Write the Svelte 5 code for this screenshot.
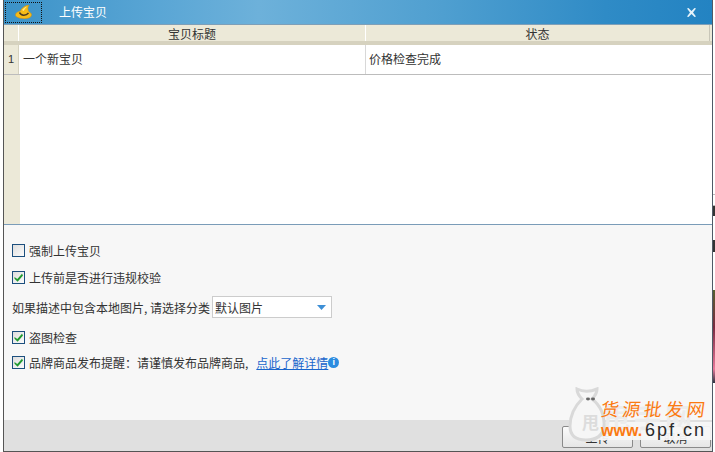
<script>
  let forceUpload = $state(false);
  let checkRules = $state(true);
  let checkStolen = $state(true);
  let brandNotice = $state(true);

  const items = [{ id: 1, title: '一个新宝贝', status: '价格检查完成' }];
</script>

{#snippet box(checked)}
  <span class="box">
    {#if checked}
      <svg width="11" height="11" viewBox="0 0 11 11"><path d="M1.5 5 L4.3 7 L9 1.8 L10 3.4 L4.6 9.8 L1.5 6.8 Z" fill="#1f9a2f" /></svg>
    {/if}
  </span>
{/snippet}

<div class="screen">
  <div class="window">
    <header class="titlebar">
      <div class="logo">
        <svg width="17" height="14" viewBox="0 0 17 14">
          <path d="M14 0 C11 0.5 7 2 5.5 6 C2 6.8 0 8.5 0.5 10.5 C1.5 13.5 12 15 15.5 12 C17.5 10 16.5 8 14 7 C12.5 5 12.5 2 14 0 Z" fill="#f6bb16" stroke="#d68f0a" stroke-width="0.5" />
          <path d="M4.5 7.5 C6 11 11 11 13.5 8" fill="none" stroke="#4a3a20" stroke-width="1.6" />
          <path d="M7 5 C8 3.4 10 2 12 1.4 C10.6 3 9.4 4.4 8.6 6 Z" fill="#ffe68a" />
        </svg>
      </div>
      <span class="title">上传宝贝</span>
      <svg class="close" width="11" height="11" viewBox="0 0 11 11">
        <path d="M1 1.5 L2.5 1 L5.5 4 L8.5 1 L10 1.5 L7 5.5 L10 9.5 L8.5 10 L5.5 7 L2.5 10 L1 9.5 L4 5.5 Z" fill="#e6f3fa" />
      </svg>
    </header>

    <section class="grid">
      <div class="grid-head">
        <div class="num-col"></div>
        <div class="col-title">宝贝标题</div>
        <div class="col-status">状态</div>
      </div>
      <div class="grid-body">
        {#each items as item, i}
          <div class="row">
            <div class="num-col">{i + 1}</div>
            <div class="col-title">{item.title}</div>
            <div class="col-status">{item.status}</div>
          </div>
        {/each}
        <div class="row-empty"><div class="num-col"></div></div>
      </div>
    </section>

    <section class="options">
      <button class="check" onclick={() => (forceUpload = !forceUpload)}>
        {@render box(forceUpload)}<span>强制上传宝贝</span>
      </button>
      <button class="check second" onclick={() => (checkRules = !checkRules)}>
        {@render box(checkRules)}<span>上传前是否进行违规校验</span>
      </button>
      <div class="category">
        <span>如果描述中包含本地图片, 请选择分类</span>
        <div class="select">
          <span>默认图片</span>
          <svg width="9" height="5" viewBox="0 0 9 5"><path d="M0 0 H9 L4.5 5 Z" fill="#3d8fd6" /></svg>
        </div>
      </div>
      <button class="check fourth" onclick={() => (checkStolen = !checkStolen)}>
        {@render box(checkStolen)}<span>盗图检查</span>
      </button>
      <div class="brand">
        <button class="check" onclick={() => (brandNotice = !brandNotice)}>
          {@render box(brandNotice)}<span>品牌商品发布提醒：请谨慎发布品牌商品,</span>
        </button>
        <a href="#details">点此了解详情</a>
        <span class="info">i</span>
      </div>
    </section>

    <footer class="footer">
      <button class="action">上传</button>
      <button class="action">取消</button>
    </footer>

    <div class="watermark">
      <span class="halo"></span>
      <span class="ghost">甩手网</span>
      <svg class="bag" width="38" height="55" viewBox="0 0 38 55">
        <path d="M9 2 C15 5 22 5 29 2 C29 7 26 10 24 12 C32 18 37 28 36 39 C35 49 28 53 18 53 C8 53 2 49 2 39 C2 28 8 18 14 12 C11 9 9 6 9 2 Z" fill="#f6f6f6" stroke="#d9d9d9" stroke-width="3" />
        <ellipse cx="20" cy="12" rx="2" ry="1.4" fill="#666" />
        <ellipse cx="25" cy="12" rx="2" ry="1.4" fill="#666" />
      </svg>
      <span class="mark-inner">甩</span>
      <span class="brand-cn">货源批发网</span>
      <span class="brand-www">www.</span>
      <span class="brand-url">6pf.cn</span>
    </div>
  </div>

  <div class="behind">
    <div class="behind-top"></div>
    <div class="behind-photo"></div>
    <div class="behind-end"></div>
  </div>
</div>

<style>
  :global(body) {
    margin: 0;
    background: #fff;
  }

  .screen {
    display: flex;
    width: 715px;
    height: 452px;
    overflow: hidden;
    font-family: "Noto Sans CJK SC", "Liberation Sans", sans-serif;
    font-size: 12px;
    color: #333;
  }

  .window {
    position: relative;
    box-sizing: border-box;
    display: flex;
    flex-direction: column;
    width: 710px;
    height: 452px;
    margin-left: 3px;
    border-left: 1px solid #555;
    border-right: 1px solid #4f5a66;
    border-bottom: 1px solid #555;
    overflow: hidden;
  }

  .titlebar {
    display: flex;
    align-items: center;
    height: 24px;
    flex: none;
    background: linear-gradient(90deg, #3b92c8 0%, #5aa6d5 22%, #6db1da 36%, #4f9fd0 62%, #2f8bc6 85%, #2383c2 100%);
    border-bottom: 1px solid #7e9fb8;
  }

  .logo {
    display: flex;
    align-items: center;
    justify-content: center;
    box-sizing: border-box;
    width: 37px;
    height: 21px;
    margin-left: 1px;
    border: 1px dotted #111;
  }

  .title {
    margin-left: 17px;
    color: #fff;
    line-height: 20px;
  }

  .close {
    margin-left: auto;
    margin-right: 15px;
  }

  .grid {
    display: flex;
    flex-direction: column;
    flex: none;
    height: 199px;
    background: #fff;
    border-bottom: 1px solid #7a9cb8;
  }

  .grid-head {
    display: flex;
    flex: none;
    height: 16px;
    background: #ece9d8;
    border-bottom: 4px solid #d6d2bf;
    line-height: 18px;
    text-align: center;
  }

  .num-col {
    flex: none;
    box-sizing: border-box;
    width: 15px;
    padding-left: 4px;
    background: #ece9d8;
  }

  .grid-head .num-col {
    border-right: 1px solid #fff;
  }

  .col-title {
    flex: none;
    width: 347px;
    box-sizing: border-box;
  }

  .col-status {
    flex: 1;
    box-sizing: border-box;
  }

  .grid-head .col-title {
    border-right: 1px solid #fff;
  }

  .grid-head .col-status {
    margin-right: 2px;
    border-right: 1px solid #c8c6b8;
  }

  .grid-body {
    display: flex;
    flex-direction: column;
    flex: 1;
    margin-right: 1px;
  }

  .row {
    display: flex;
    flex: none;
    height: 29px;
    border-bottom: 1px solid #bcbcbc;
    line-height: 28px;
  }

  .row .num-col {
    font-family: "Liberation Sans", sans-serif;
    font-size: 11px;
    border-right: 1px solid #d6d2bf;
  }

  .row .col-title {
    padding-left: 4px;
    border-right: 1px solid #d8d8d8;
  }

  .row .col-status {
    padding-left: 3px;
  }

  .row-empty {
    display: flex;
    flex: 1;
  }

  .row-empty .num-col {
    width: 16px;
  }

  .options {
    display: flex;
    flex-direction: column;
    align-items: flex-start;
    box-sizing: border-box;
    flex: none;
    height: 195px;
    padding: 15px 0 0 8px;
    background: #f7f7f7;
  }

  .check {
    display: flex;
    align-items: center;
    gap: 4px;
    height: 20px;
    padding: 0;
    border: 0;
    background: none;
    font: inherit;
    color: inherit;
    cursor: pointer;
  }

  .second {
    margin-top: 7px;
  }

  .fourth {
    margin-top: 9px;
  }

  .box {
    display: flex;
    align-items: center;
    justify-content: center;
    box-sizing: border-box;
    width: 13px;
    height: 13px;
    border: 1px solid #1c4f7e;
    background: linear-gradient(135deg, #dedede, #fbfbfb);
  }

  .category {
    display: flex;
    align-items: center;
    gap: 2px;
    height: 22px;
    margin-top: 9px;
  }

  .select {
    display: flex;
    align-items: center;
    justify-content: space-between;
    box-sizing: border-box;
    width: 120px;
    height: 22px;
    padding: 0 5px 0 2px;
    border: 1px solid #ccc;
    background: #fff;
  }

  .brand {
    display: flex;
    align-items: center;
    height: 20px;
    margin-top: 5px;
  }

  .brand a {
    margin-left: 8px;
    color: #1a66cc;
  }

  .info {
    display: flex;
    align-items: center;
    justify-content: center;
    width: 11px;
    height: 11px;
    border-radius: 50%;
    background: #2b8ce0;
    color: #fff;
    font-family: "Liberation Sans", sans-serif;
    font-size: 9px;
    font-weight: bold;
  }

  .footer {
    display: flex;
    flex: 1;
    justify-content: flex-end;
    gap: 7px;
    padding: 6px 1px 0 0;
    background: #e0e0e0;
  }

  .action {
    box-sizing: border-box;
    width: 71px;
    height: 22px;
    padding: 0;
    border: 1px solid #8a8a8a;
    border-radius: 2px;
    background: linear-gradient(#fbfbfb, #e6e6e6);
    font: inherit;
    color: #333;
  }

  /* watermark stamped over the corner of the window */
  .watermark {
    position: absolute;
    left: 561px;
    top: 385px;
    width: 148px;
    height: 66px;
    pointer-events: none;
  }

  .halo {
    position: absolute;
    left: 22px;
    top: 37px;
    width: 125px;
    height: 18px;
    background: rgba(246, 246, 246, 0.94);
  }

  .ghost {
    position: absolute;
    left: 38px;
    top: 17px;
    font-size: 27px;
    line-height: 30px;
    font-weight: bold;
    letter-spacing: 4px;
    color: #ececec;
    white-space: nowrap;
  }

  .bag {
    position: absolute;
    left: 3px;
    top: 2px;
  }

  .mark-inner {
    position: absolute;
    left: 17px;
    top: 26px;
    font-size: 17px;
    line-height: 22px;
    font-weight: bold;
    color: #dcdcdc;
  }

  .brand-cn {
    position: absolute;
    left: 36px;
    top: 11px;
    font-size: 18px;
    line-height: 24px;
    letter-spacing: 3.5px;
    color: #fb7a12;
    white-space: nowrap;
    transform: skewX(-8deg);
  }

  .brand-www {
    position: absolute;
    left: 36px;
    top: 36px;
    font-family: "Liberation Sans", sans-serif;
    font-size: 16px;
    line-height: 20px;
    font-weight: bold;
    color: #fb7a12;
    white-space: nowrap;
  }

  .brand-url {
    position: absolute;
    left: 80px;
    top: 34px;
    font-family: "Liberation Sans", sans-serif;
    font-size: 18px;
    line-height: 22px;
    letter-spacing: 2px;
    color: #2a2a2a;
    white-space: nowrap;
  }

  .behind {
    display: flex;
    flex-direction: column;
    flex: none;
    width: 2px;
  }

  .behind-top {
    height: 290px;
    background: linear-gradient(#fff 0 194px, #bbb 194px 195px, #fff 195px 205px, #bbb 205px 206px, #333 206px 216px, #fff 216px 240px, #333 240px 252px, #fff 252px);
  }

  .behind-photo {
    height: 93px;
    background: linear-gradient(#55602f, #7a2a40 40%, #e8789a 85%, #2c3340);
  }

  .behind-end {
    flex: 1;
    background: #fff;
  }
</style>
